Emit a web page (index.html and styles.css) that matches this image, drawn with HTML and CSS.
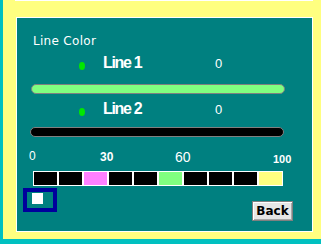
FILE: index.html
```html
<!DOCTYPE html>
<html>
	<head>
		<meta charset="UTF-8" />
		<title>Line Color</title>
		<link rel="stylesheet" href="styles.css">
	</head>
	<body>
		<div class="screen">
			<div class="prev-edge"></div>
			<div class="panel">
				<div class="title">Line Color</div>
				<div class="line-row">
					<span class="dot"></span>
					<span class="line-name">Line 1</span>
					<span class="line-value">0</span>
				</div>
				<div class="track track-one"></div>
				<div class="line-row line-row-two">
					<span class="dot"></span>
					<span class="line-name">Line 2</span>
					<span class="line-value">0</span>
				</div>
				<div class="track track-two"></div>
				<div class="scale">
					<span class="tick tick-0">0</span>
					<span class="tick tick-30">30</span>
					<span class="tick tick-60">60</span>
					<span class="tick tick-100">100</span>
				</div>
				<div class="palette">
					<span class="cell"></span>
					<span class="cell"></span>
					<span class="cell pink"></span>
					<span class="cell"></span>
					<span class="cell"></span>
					<span class="cell green"></span>
					<span class="cell"></span>
					<span class="cell"></span>
					<span class="cell"></span>
					<span class="cell yellow"></span>
				</div>
				<div class="bottom">
					<div class="focus-box">
						<span class="focus-mark"></span>
					</div>
					<button class="back">Back</button>
				</div>
			</div>
		</div>
	</body>
</html>
```

FILE: styles.css
```css
* {
	margin: 0;
	padding: 0;
}
body {
	font-family: "DejaVu Sans", sans-serif;
	background-color: #ffff80;
}
.screen {
	width: 321px;
	height: 244px;
	box-sizing: border-box;
	background-color: #ffff80;
	border-left: 3px solid #00c0c0;
	border-bottom: 5px solid #00c0c0;
	overflow: hidden;
}
.prev-edge {
	width: 298px;
	height: 1px;
	margin-left: 12px;
	background-color: #fff;
}
.panel {
	width: 297px;
	height: 215px;
	margin-top: 16px;
	margin-left: 13px;
	box-sizing: border-box;
	border: 1px solid #fff;
	background-color: #008080;
	padding-top: 16px;
	color: #fff;
}
.title {
	margin-left: 16px;
	font-size: 12px;
	line-height: 14px;
	letter-spacing: 0.3px;
}
.line-row {
	display: flex;
	align-items: baseline;
	height: 18px;
	margin-top: 6px;
}
.line-row-two {
	margin-top: 6px;
}
.dot {
	align-self: flex-start;
	width: 6px;
	height: 8px;
	margin-top: 8px;
	margin-left: 62px;
	border-radius: 50%;
	background-color: #00e800;
}
.line-name {
	width: 112px;
	margin-left: 18px;
	font-family: "Liberation Sans", sans-serif;
	font-weight: bold;
	font-size: 16px;
	line-height: 18px;
	letter-spacing: -1.3px;
}
.line-value {
	font-family: "Liberation Sans", sans-serif;
	font-size: 13px;
}
.track {
	width: 254px;
	height: 10px;
	box-sizing: border-box;
	border: 1px solid #808080;
	border-radius: 5px;
}
.track-one {
	margin-top: 12px;
	margin-left: 14px;
	background-color: #80ff80;
}
.track-two {
	margin-top: 9px;
	margin-left: 13px;
	background-color: #000;
}
.scale {
	display: flex;
	align-items: flex-start;
	height: 15px;
	margin-top: 13px;
	font-family: "Liberation Sans", sans-serif;
}
.tick {
	font-size: 12px;
	line-height: 12px;
}
.tick-0 {
	width: 71px;
	margin-left: 12px;
}
.tick-30 {
	width: 75px;
	margin-top: 1px;
	font-weight: bold;
}
.tick-60 {
	width: 98px;
	font-size: 14px;
	line-height: 14px;
}
.tick-100 {
	margin-top: 3px;
	font-size: 11px;
	font-weight: bold;
}
.palette {
	display: flex;
	gap: 2px;
	width: 250px;
	box-sizing: border-box;
	margin-top: 6px;
	margin-left: 16px;
	padding: 1px;
	background-color: #fff;
}
.cell {
	width: 23px;
	height: 13px;
	background-color: #000;
}
.cell.pink {
	background-color: #ff80ff;
}
.cell.green {
	background-color: #80ff80;
}
.cell.yellow {
	background-color: #ffff80;
}
.bottom {
	display: flex;
	align-items: flex-start;
	justify-content: space-between;
	margin-top: 2px;
	padding-left: 6px;
	padding-right: 19px;
}
.focus-box {
	width: 34px;
	height: 24px;
	box-sizing: border-box;
	border: 4px solid #00009c;
	padding-left: 5px;
	padding-top: 1px;
}
.focus-mark {
	display: block;
	width: 11px;
	height: 11px;
	background-color: #fff;
}
.back {
	width: 41px;
	height: 20px;
	margin-top: 13px;
	box-sizing: border-box;
	border: 1px solid #808080;
	box-shadow: inset 1px 1px 0 #fff, inset -1px -1px 0 #a8a8a8;
	background-color: #e6e6e6;
	color: #000;
	font-family: "DejaVu Sans", sans-serif;
	font-weight: bold;
	font-size: 12px;
	line-height: 16px;
	cursor: pointer;
}
```
